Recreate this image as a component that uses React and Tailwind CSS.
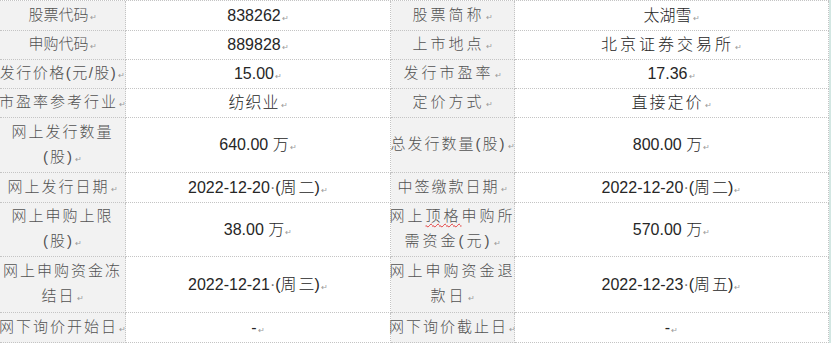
import React from "react";

const cjk = "font-['Liberation_Sans','Noto_Sans_CJK_SC',sans-serif]";

// Word paragraph mark
const Mark = () => <span className="text-[8px] text-[#9a9a9a] align-baseline ml-[1px] tracking-normal">↵</span>;
const Dot = () => <span className="text-[#777] tracking-normal">·</span>;

const rows = [
  {
    h: "h-[30px]",
    l1: { t: "股票代码", tr: "tracking-[0px]" },
    v1: "838262",
    l2: { t: "股票简称", tr: "tracking-[3px]" },
    v2: <span className="tracking-[0px]">太湖雪</span>,
  },
  {
    h: "h-[29px]",
    l1: { t: "申购代码", tr: "tracking-[0px]" },
    v1: "889828",
    l2: { t: "上市地点", tr: "tracking-[3px]" },
    v2: <span className="tracking-[3px]">北京证券交易所</span>,
  },
  {
    h: "h-[29px]",
    l1: { t: "发行价格(元/股)", tr: "tracking-[1.5px]" },
    v1: "15.00",
    l2: { t: "发行市盈率", tr: "tracking-[3px]" },
    v2: "17.36",
  },
  {
    h: "h-[29px]",
    l1: { t: "市盈率参考行业", tr: "tracking-[2px]" },
    v1: <span className="tracking-[1px]">纺织业</span>,
    l2: { t: "定价方式", tr: "tracking-[3px]" },
    v2: <span className="tracking-[2px]">直接定价</span>,
  },
  {
    h: "h-[55px]",
    l1: { t: ["网上发行数量", "(股)"], tr: "tracking-[2px]" },
    v1: <>640.00 万</>,
    l2: { t: "总发行数量(股)", tr: "tracking-[2px]" },
    v2: <>800.00 万</>,
  },
  {
    h: "h-[30px]",
    l1: { t: "网上发行日期", tr: "tracking-[2px]" },
    v1: <>2022-12-20<Dot />(周<span className="ml-[2px]">二</span>)</>,
    l2: { t: "中签缴款日期", tr: "tracking-[2px]" },
    v2: <>2022-12-20<Dot />(周<span className="ml-[2px]">二</span>)</>,
  },
  {
    h: "h-[54px]",
    l1: { t: ["网上申购上限", "(股)"], tr: "tracking-[2px]" },
    v1: <>38.00 万</>,
    l2: {
      t: [
        <>网上<span className="underline decoration-wavy decoration-[#e23a3a] decoration-1 underline-offset-2">顶格</span>申购所</>,
        "需资金(元)",
      ],
      tr: "tracking-[3px]",
    },
    v2: <>570.00 万</>,
  },
  {
    h: "h-[56px]",
    l1: { t: ["网上申购资金冻", "结日"], tr: "tracking-[2px]" },
    v1: <>2022-12-21<Dot />(周<span className="ml-[2px]">三</span>)</>,
    l2: { t: ["网上申购资金退", "款日"], tr: "tracking-[3px]" },
    v2: <>2022-12-23<Dot />(周<span className="ml-[2px]">五</span>)</>,
  },
  {
    h: "h-[30px]",
    l1: { t: "网下询价开始日", tr: "tracking-[2px]" },
    v1: "-",
    l2: { t: "网下询价截止日", tr: "tracking-[2px]" },
    v2: "-",
  },
];

const cellBase = "flex items-center justify-center text-center border-r border-b border-dotted border-[#c4c4c4]";

const Label = ({ l, h }) => {
  const lines = Array.isArray(l.t) ? l.t : [l.t];
  return (
    <div className={`${cellBase} ${h} bg-[#f2f2f2] text-[#525252] text-[15px] font-light whitespace-nowrap`}>
      <div className={`${l.tr} leading-[25px]`}>
        {lines.map((line, i) => (
          <div key={i}>
            {line}
            {i === lines.length - 1 && <Mark />}
          </div>
        ))}
      </div>
    </div>
  );
};

const Value = ({ v, h }) => (
  <div className={`${cellBase} ${h} bg-white text-[#262626] text-[16px] font-light whitespace-nowrap`}>
    <div>
      {v}
      <Mark />
    </div>
  </div>
);

export default function App() {
  return (
    <div className={`w-[831px] h-[343px] bg-white overflow-hidden ${cjk}`}>
      <div className="flex h-[343px]">
        <div className="w-[829px] border-b border-[#cfe6d8]">
          <div className="grid grid-cols-[126px_265px_124px_314px] border-t border-dotted border-[#c4c4c4]">
            {rows.map((r, i) => (
              <React.Fragment key={i}>
                <Label l={r.l1} h={r.h} />
                <Value v={r.v1} h={r.h} />
                <Label l={r.l2} h={r.h} />
                <Value v={r.v2} h={r.h} />
              </React.Fragment>
            ))}
          </div>
        </div>
        <div className="w-[2px] bg-[#d3e7e3]" />
      </div>
    </div>
  );
}
